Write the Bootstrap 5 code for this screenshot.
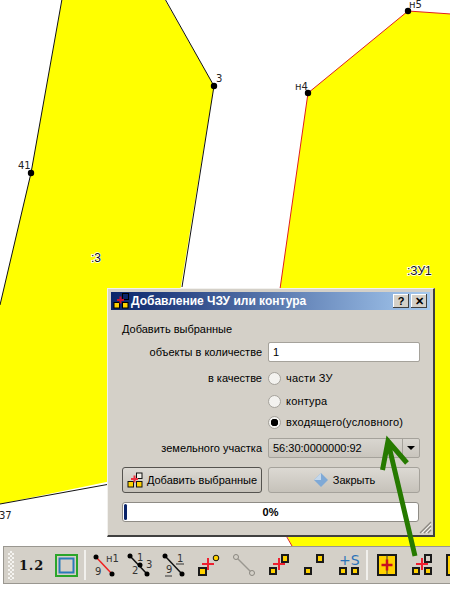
<!DOCTYPE html>
<html lang="ru">
<head>
    <meta charset="UTF-8">
    <title>Добавление ЧЗУ или контура</title>
    <link href="https://cdn.jsdelivr.net/npm/bootstrap@5.3.0/dist/css/bootstrap.min.css" rel="stylesheet">
    <style>
        html, body { width: 450px; height: 590px; overflow: hidden; background: #fff; }
        body { position: relative; font-family: "Liberation Sans", sans-serif; font-size: 11px; line-height: 1; color: #000; }

        .map-area { height: 546px; }
        .map-area svg { display: block; }
        .map-label { font-family: "DejaVu Sans", sans-serif; font-size: 10px; fill: #222; }
        .map-name { font-family: "Liberation Sans", sans-serif; font-size: 12px; fill: #111; stroke: #fff; stroke-width: 1.5px; paint-order: stroke; }

        .qdialog {
            position: absolute; left: 107px; top: 288px; width: 328px; height: 249px;
            background: #d4d0c8; padding: 3px;
            border-top: 1px solid #f2f1ee; border-left: 1px solid #f2f1ee;
            border-right: 2px solid #404040; border-bottom: 2px solid #404040;
        }
        .qtitle {
            height: 18px; padding: 0 3px 0 2px; gap: 2px; color: #fff; font-weight: 700; font-size: 12px;
            background: linear-gradient(90deg, #0a246a, #a6caf0);
        }
        .qtitle-btn {
            width: 16px; height: 14px; padding: 0; border: 0; border-radius: 0; background: #d4d0c8; color: #000;
            font-size: 11px; line-height: 14px; font-weight: 700; font-family: "Liberation Sans", sans-serif;
            box-shadow: inset -1px -1px 0 #404040, inset 1px 1px 0 #fff;
        }
        .qbody { padding: 13px 11px 0 11px; }
        .qheading { height: 12px; line-height: 12px; margin-bottom: 7px; }
        .qrow { display: flex; gap: 6px; align-items: center; }
        .qrow-radio { height: 13px; }
        .qlabel { width: 140px; text-align: right; flex: none; white-space: nowrap; }
        .qfield { width: 152px; flex: none; }

        .qbody .form-control {
            height: 20px; min-height: 0; padding: 0 4px; font-size: 11px; border-radius: 2px;
            border: 1px solid #a5a29b; color: #000;
        }
        .qbody .form-check { min-height: 0; margin: 0; padding: 0; gap: 5px; }
        .qbody .form-check-input {
            width: 13px; height: 13px; margin: 0; float: none; border: 1px solid #a5a29b;
            background: #f3f2ef; flex: none;
        }
        .qbody .form-check-input:checked {
            background: radial-gradient(circle, #000 0 3.5px, #f3f2ef 4px);
        }
        .qbody .form-check-label { font-size: 11px; letter-spacing: .2px; white-space: nowrap; }

        .qcombo {
            height: 20px; border: 1px solid #a5a29b; border-radius: 2px; overflow: hidden;
            background: linear-gradient(#d9d6d0, #c9c5bd);
        }
        .qcombo-text { flex: 1; padding: 0 4px; font-size: 11px; line-height: 18px; }
        .qcombo-arrow { width: 17px; border-left: 1px solid #a5a29b; }
        .qcombo-arrow::after {
            content: ""; border-left: 4px solid transparent; border-right: 4px solid transparent; border-top: 4px solid #000;
        }
        .qbtn {
            height: 26px; padding: 0; font-size: 11px; color: #000; gap: 4px; border-radius: 3px;
            border: 1px solid #a5a29b; background: linear-gradient(#dcd9d3, #c6c2ba);
        }
        .qbtn-default { border-color: #55534f; }
        .qprogress { height: 20px; border: 1px solid #8f8c86; border-radius: 3px; background: #fff; padding: 1px; position: relative; }
        .qprogress .progress-bar { border-radius: 2px; background: #0a246a; }
        .qprogress-text {
            position: absolute; inset: 0; text-align: center; line-height: 18px; font-weight: 700; color: #000; font-size: 11px;
        }
        .qgrip {
            position: absolute; right: 1px; bottom: 1px; width: 14px; height: 14px;
        }
        /* vertical rhythm of dialog rows */
        .step-first { margin-top: 10px; }
        .step-second { margin-top: 10px; }
        .step-third { margin-top: 8px; }
        .step-combo { margin-top: 9px; }
        .step-buttons { margin-top: 9px; }
        .step-progress { margin-top: 9px; }

        .qtoolbar {
            margin-left: 3px; height: 38px; background: #d4d0c8;
            border-top: 1px solid #9a9790; border-left: 1px solid #9a9790; border-bottom: 1px solid #9a9790;
            overflow: hidden;
        }
        .tb-grip {
            width: 6px; height: 29px; margin-left: 4px;
            background: repeating-conic-gradient(#f4f3f0 0 25%, transparent 0 50%) 0 0 / 4px 4px;
        }
        .tb-version { width: 30px; margin-left: 5px; font-family: "DejaVu Serif", serif; font-weight: 700; font-size: 13px; letter-spacing: .8px; color: #111; }
        .tb-sep { width: 2px; height: 30px; background: #f1f0ec; flex: none; }
        .tb-slot { width: 35px; height: 26px; flex: none; display: block; }
        .tb-slot text { font-family: "DejaVu Sans", sans-serif; font-size: 10px; fill: #333; }
        .tb-slot .tb-plus-s { font-size: 14px; fill: #2a72b8; }
        .ys { fill: #ffd200; stroke: #1a1a1a; stroke-width: 2; }
        .gs { fill: #d4d0c8; stroke: #1a1a1a; stroke-width: 2; }
        .rp { stroke: #ee2030; stroke-width: 2; fill: none; }

        .green-arrow { position: absolute; left: 0; top: 0; pointer-events: none; }
    </style>
</head>
<body>
    <div class="map-area">
        <svg width="450" height="546">
            <polygon points="62,0 165,0 214,86 150,473 0,504 0,305 31,173" fill="#ffff00"/>
            <polyline points="62,-1 31,173 0,305" fill="none" stroke="#111"/>
            <polyline points="165,-1 214,86 182,287" fill="none" stroke="#111"/>
            <polyline points="0,504 110,484" fill="none" stroke="#111"/>
            <polygon points="451,14 408,11 308,93 280,289 270,500 292,546 451,546" fill="#ffff00"/>
            <polyline points="451,14 408,11 308,93 280,289" fill="none" stroke="#e02020"/>
            <polyline points="284,532 292,546" fill="none" stroke="#e02020"/>
            <circle cx="214" cy="86" r="3.2" fill="#000"/>
            <circle cx="31" cy="173" r="3.2" fill="#000"/>
            <circle cx="308" cy="93" r="3.2" fill="#000"/>
            <circle cx="408" cy="11" r="3.2" fill="#000"/>
            <text class="map-label" x="216" y="82">3</text>
            <text class="map-label" x="18" y="169">41</text>
            <text class="map-label" x="295" y="90">н4</text>
            <text class="map-label" x="409" y="8">н5</text>
            <text class="map-label" x="-1" y="519">37</text>
            <text class="map-name" x="91" y="262">:3</text>
            <text class="map-name" x="407" y="275">:ЗУ1</text>
        </svg>
    </div>

    <div class="qdialog">
        <div class="qtitle d-flex align-items-center">
            <svg width="16" height="16" viewBox="0 0 16 16" class="flex-shrink-0">
                <rect x="9.5" y="0.5" width="6" height="6" fill="#0a246a" stroke="#000"/>
                <rect x="1" y="9.5" width="5.5" height="5.5" fill="#ffd200" stroke="#000"/>
                <rect x="9.5" y="9.5" width="5.5" height="5.5" fill="#ffd200" stroke="#000"/>
                <path d="M7.5 3.5v7M4 7h7" stroke="#c81030" stroke-width="2" fill="none"/>
            </svg>
            <span class="flex-grow-1 text-nowrap">Добавление ЧЗУ или контура</span>
            <button type="button" class="btn qtitle-btn">?</button>
            <button type="button" class="btn qtitle-btn">✕</button>
        </div>
        <div class="qbody">
            <div class="qheading">Добавить выбранные</div>
            <div class="qrow">
                <div class="qlabel">объекты в количестве</div>
                <div class="qfield"><input class="form-control" type="text" value="1"></div>
            </div>
            <div class="qrow qrow-radio step-first">
                <div class="qlabel">в качестве</div>
                <div class="qfield form-check d-flex align-items-center">
                    <input class="form-check-input" type="radio" name="kind" id="kind1">
                    <label class="form-check-label" for="kind1">части ЗУ</label>
                </div>
            </div>
            <div class="qrow qrow-radio step-second">
                <div class="qlabel"></div>
                <div class="qfield form-check d-flex align-items-center">
                    <input class="form-check-input" type="radio" name="kind" id="kind2">
                    <label class="form-check-label" for="kind2">контура</label>
                </div>
            </div>
            <div class="qrow qrow-radio step-third">
                <div class="qlabel"></div>
                <div class="qfield form-check d-flex align-items-center">
                    <input class="form-check-input" type="radio" name="kind" id="kind3" checked>
                    <label class="form-check-label" for="kind3">входящего(условного)</label>
                </div>
            </div>
            <div class="qrow step-combo">
                <div class="qlabel">земельного участка</div>
                <div class="qfield qcombo d-flex">
                    <div class="qcombo-text">56:30:0000000:92</div>
                    <div class="qcombo-arrow d-flex align-items-center justify-content-center"></div>
                </div>
            </div>
            <div class="qrow step-buttons">
                <button type="button" class="btn qbtn qbtn-default qlabel d-flex align-items-center justify-content-center">
                    <svg width="16" height="16" viewBox="0 0 16 16" class="flex-shrink-0">
                        <rect x="9.5" y="1" width="5.5" height="5.5" fill="#f0eee8" stroke="#111"/>
                        <rect x="1" y="9.5" width="5.5" height="5.5" fill="#ffd200" stroke="#111"/>
                        <rect x="9.5" y="9.5" width="5.5" height="5.5" fill="#ffd200" stroke="#111"/>
                        <path d="M7.5 3.5v7M4 7h7" stroke="#ee3040" stroke-width="2" fill="none"/>
                    </svg>
                    Добавить выбранные
                </button>
                <button type="button" class="btn qbtn qfield d-flex align-items-center justify-content-center">
                    <svg width="16" height="16" viewBox="0 0 16 16" class="flex-shrink-0">
                        <path d="M8 1 15 8 8 15 1 8Z" fill="#7fa9d6"/>
                        <path d="M8 1 1 8 8 8Z" fill="#c4d8ec"/>
                    </svg>
                    Закрыть
                </button>
            </div>
            <div class="progress qprogress step-progress">
                <div class="progress-bar" style="width: 1%; min-width: 3px"></div>
                <div class="qprogress-text">0%</div>
            </div>
        </div>
        <svg class="qgrip" viewBox="0 0 14 14">
            <path d="M13 2 2 13M13 6 6 13M13 10 10 13" stroke="#8a8780" stroke-width="1.2" fill="none"/>
            <path d="M13 4 4 13M13 8 8 13" stroke="#f4f3f0" fill="none"/>
        </svg>
    </div>

    <div class="qtoolbar d-flex align-items-center">
        <div class="tb-grip flex-shrink-0"></div>
        <div class="tb-version flex-shrink-0">1.2</div>

        <svg class="tb-slot" viewBox="0 0 35 26">
            <rect x="7" y="3" width="21" height="21" fill="none" stroke="#2aa52a" stroke-width="2"/>
            <rect x="10.5" y="6.5" width="14" height="14" fill="none" stroke="#2a7ab8" stroke-width="2"/>
        </svg>
        <div class="tb-sep"></div>

        <svg class="tb-slot" viewBox="0 0 35 26">
            <path d="M10 5 26 22" stroke="#ee2020" stroke-width="1.5"/>
            <circle cx="10" cy="5" r="2.5"/><circle cx="26" cy="22" r="2.5"/>
            <text x="20" y="10">н1</text><text x="9" y="23">9</text>
        </svg>
        <svg class="tb-slot" viewBox="0 0 35 26">
            <path d="M9 4 26 22" stroke="#111" stroke-width="1.5"/>
            <circle cx="9" cy="4" r="2.5"/><circle cx="19" cy="13" r="2.5"/><circle cx="26" cy="22" r="2.5"/>
            <text x="16" y="9">1</text><text x="11" y="22">2</text><text x="25" y="16">3</text>
        </svg>
        <svg class="tb-slot" viewBox="0 0 35 26">
            <path d="M9 4 26 22" stroke="#111" stroke-width="1.5"/>
            <circle cx="9" cy="4" r="2.5"/><circle cx="26" cy="22" r="2.5"/>
            <text x="21" y="10">1</text><path d="M20 12h8M9 24h7" stroke="#333"/><text x="10" y="21">9</text>
        </svg>
        <svg class="tb-slot" viewBox="0 0 35 26">
            <rect class="ys" x="8" y="16" width="7" height="7"/>
            <path class="rp" d="M17 6v12M11 12h12"/>
            <circle cx="25" cy="6" r="2.8" fill="#ffd200" stroke="#111"/>
        </svg>
        <svg class="tb-slot" viewBox="0 0 35 26">
            <path d="M10 5 26 21" stroke="#9a9790" stroke-width="1.5"/>
            <circle cx="10" cy="5" r="2.5" fill="#d4d0c8" stroke="#8a8780"/>
            <circle cx="26" cy="21" r="2.5" fill="#d4d0c8" stroke="#8a8780"/>
        </svg>
        <svg class="tb-slot" viewBox="0 0 35 26">
            <rect class="ys" x="21" y="3" width="6" height="7"/>
            <rect class="ys" x="9" y="16" width="6" height="6"/>
            <path class="rp" d="M18 6v12M12 12h12"/>
        </svg>
        <svg class="tb-slot" viewBox="0 0 35 26">
            <rect class="ys" x="21" y="3" width="6" height="7"/>
            <rect class="ys" x="9" y="16" width="6" height="6"/>
        </svg>
        <svg class="tb-slot" viewBox="0 0 35 26">
            <text class="tb-plus-s" x="8" y="13">+S</text>
            <rect class="ys" x="9" y="16" width="6" height="6"/>
            <rect class="ys" x="21" y="16" width="6" height="6"/>
        </svg>
        <div class="tb-sep"></div>

        <svg class="tb-slot" viewBox="0 0 35 26">
            <rect class="ys" x="10" y="3" width="18" height="20"/>
            <path d="M19 3v20" stroke="#333"/>
            <path d="M19 7.5v11M13.5 13h11" stroke="#c81020" stroke-width="2.5" fill="none"/>
        </svg>
        <svg class="tb-slot" viewBox="0 0 35 26">
            <rect class="gs" x="22" y="3" width="6" height="7"/>
            <rect class="ys" x="10" y="16" width="6" height="6"/>
            <rect class="ys" x="22" y="16" width="6" height="6"/>
            <path class="rp" d="M19 6v12M13 12h12"/>
        </svg>
        <svg class="tb-slot" viewBox="0 0 35 26">
            <rect class="ys" x="9" y="3" width="18" height="20"/>
        </svg>
    </div>

    <svg class="green-arrow" width="450" height="590">
        <path d="M415 556 388 442M382.500 470 388 441 407 463" fill="none" stroke="#267a00" stroke-width="5"/>
    </svg>
</body>
</html>
